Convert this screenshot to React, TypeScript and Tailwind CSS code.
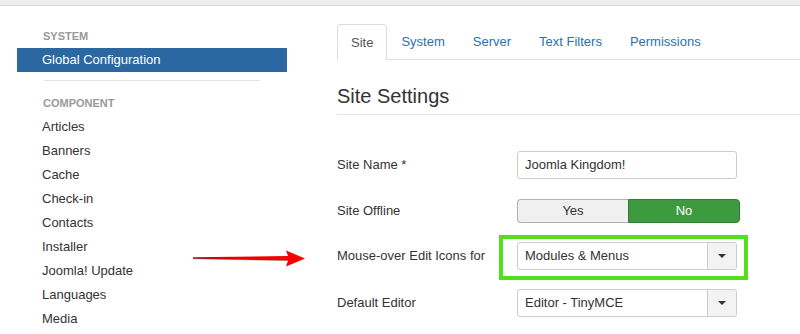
import React from "react";

const sideItems = [
  "Articles",
  "Banners",
  "Cache",
  "Check-in",
  "Contacts",
  "Installer",
  "Joomla! Update",
  "Languages",
  "Media",
];

const tabs = ["Site", "System", "Server", "Text Filters", "Permissions"];

function Caret() {
  return (
    <div className="flex h-full w-[29px] items-center justify-center border-l border-[#ccc] bg-[#f3f3f3] rounded-r-[3px]">
      <svg width="8" height="4" viewBox="0 0 8 4">
        <path d="M0 0 L8 0 L4 4 Z" fill="#333" />
      </svg>
    </div>
  );
}

function Select({ value }: { value: string }) {
  return (
    <div className="flex h-[28px] w-[220px] items-center rounded-[3px] border border-[#ccc] bg-white">
      <div className="flex-1 pl-[7px] text-[13px] text-[#333]">{value}</div>
      <Caret />
    </div>
  );
}

export default function App() {
  return (
    <div
      className="relative h-[334px] w-[800px] overflow-hidden bg-white"
      style={{ fontFamily: '"Liberation Sans", Arial, sans-serif' }}
    >
      <div className="h-[5px] border-b border-[#dcdcdc] bg-[#eeeeee] box-content" />
      <div className="flex">
        {/* Sidebar */}
        <div className="ml-[17px] w-[270px] pt-[22px]">
          <div className="pl-[26px] text-[11px] font-bold leading-[16px] text-[#999]">SYSTEM</div>
          <div className="mt-[4px] h-[24px] bg-[#2b67a0] pl-[25px] text-[13px] leading-[24px] text-white">
            Global Configuration
          </div>
          <div className="ml-[27px] mt-[8px] h-px w-[216px] bg-[#e3e3e3]" />
          <div className="mt-[14px] pl-[26px] text-[11px] font-bold leading-[16px] text-[#999]">COMPONENT</div>
          <div className="mt-[4px]">
            {sideItems.map((s) => (
              <div key={s} className="h-[24px] pl-[25px] text-[13px] leading-[24px] text-[#333]">
                {s}
              </div>
            ))}
          </div>
        </div>

        {/* Content */}
        <div className="ml-[50px] flex-1 pt-[18px]">
          <div className="flex h-[36px] border-b border-[#ddd]">
            {tabs.map((t, i) =>
              i === 0 ? (
                <div
                  key={t}
                  className="-mb-px h-[36px] rounded-t-[4px] border border-b-0 border-[#ddd] bg-white px-[13px] text-[13px] leading-[35px] text-[#555]"
                >
                  {t}
                </div>
              ) : (
                <div key={t} className="px-[14px] text-[13px] leading-[35px] text-[#2f6fae]">
                  {t}
                </div>
              )
            )}
          </div>

          <div className="mt-[24px] border-b border-[#e5e5e5] pb-[6px] text-[20px] leading-[24px] text-[#333]">
            Site Settings
          </div>

          <div className="mt-[36px] flex h-[28px] items-center">
            <div className="w-[180px] text-[13px] text-[#333]">Site Name *</div>
            <div className="flex h-[28px] w-[220px] items-center rounded-[3px] border border-[#ccc] pl-[7px] text-[13px] text-[#333]">
              Joomla Kingdom!
            </div>
          </div>

          <div className="mt-[20px] flex h-[24px] items-center">
            <div className="w-[180px] text-[13px] text-[#333]">Site Offline</div>
            <div className="flex h-[24px] w-[223px]">
              <div className="flex w-[111px] items-center justify-center rounded-l-[4px] border border-r-0 border-[#b0b0b0] bg-[#f0f0f0] text-[13px] text-[#333]">
                Yes
              </div>
              <div className="flex flex-1 items-center justify-center rounded-r-[4px] border border-[#2f7d32] bg-[#3e9a3e] text-[13px] text-white">
                No
              </div>
            </div>
          </div>

          <div className="mt-[19px] flex h-[28px] items-center">
            <div className="w-[180px] text-[13px] text-[#333]">Mouse-over Edit Icons for</div>
            <div className="relative">
              <div className="absolute left-[-18px] top-[-7px] h-[45px] w-[249px] border-[4px] border-[#52e01a]" />
              <Select value="Modules & Menus" />
            </div>
          </div>

          <div className="mt-[19px] flex h-[28px] items-center">
            <div className="w-[180px] text-[13px] text-[#333]">Default Editor</div>
            <Select value="Editor - TinyMCE" />
          </div>
        </div>
      </div>

      {/* Arrow */}
      <svg className="absolute left-[192px] top-[249px]" width="114" height="19" viewBox="0 0 114 19">
        <defs>
          <linearGradient id="ag" x1="0" y1="0" x2="1" y2="0">
            <stop offset="0" stopColor="#a01010" />
            <stop offset="0.3" stopColor="#e00000" />
            <stop offset="1" stopColor="#ff0000" />
          </linearGradient>
        </defs>
        <path d="M1 8.2 L96 7 L94 1.5 L113 9.5 L94 17.5 L96 11.5 L1 9.8 Z" fill="url(#ag)" />
        <path d="M1 9.8 L96 11.5" stroke="#555" strokeOpacity="0.5" strokeWidth="0.8" />
      </svg>
    </div>
  );
}
